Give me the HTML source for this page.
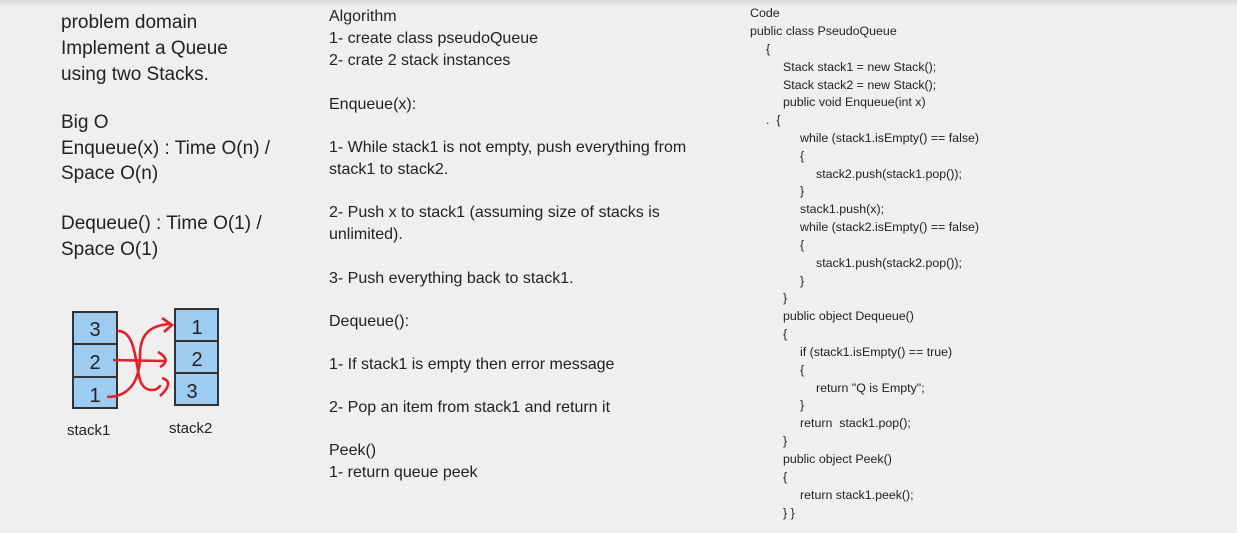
<!DOCTYPE html>
<html><head><style>
body{margin:0;width:1237px;height:533px;background:#efefef;position:relative;overflow:hidden;font-family:"Liberation Sans",sans-serif;color:#222}
.t{position:absolute;white-space:nowrap}
.l{font-size:19px}
.m{font-size:16px}
.c{font-size:12.4px}
.sh{position:absolute;left:0;top:0;width:1237px;height:6px;background:linear-gradient(#d8d8d8,#efefef)}
</style></head><body>
<div class="sh"></div>
<div class="t l" style="left:61px;top:12px">problem domain</div>
<div class="t l" style="left:61px;top:38px">Implement a Queue</div>
<div class="t l" style="left:61px;top:64px">using two Stacks.</div>
<div class="t l" style="left:61px;top:112px">Big O</div>
<div class="t l" style="left:61px;top:138px">Enqueue(x) : Time O(n) /</div>
<div class="t l" style="left:61px;top:163px">Space O(n)</div>
<div class="t l" style="left:61px;top:213px">Dequeue() : Time O(1) /</div>
<div class="t l" style="left:61px;top:239px">Space O(1)</div>

<svg style="position:absolute;left:0;top:0" width="300" height="533">
<g stroke="#333" stroke-width="2" fill="#9ecbf0">
<rect x="73" y="312" width="44" height="96"/>
<rect x="175" y="309" width="43" height="96"/>
</g>
<g stroke="#333" stroke-width="2">
<line x1="74" y1="344" x2="118" y2="344"/><line x1="74" y1="377" x2="117" y2="377"/>
<line x1="175" y1="341" x2="219" y2="341"/><line x1="175" y1="373" x2="218" y2="373"/>
</g>
<g font-family="Liberation Sans" font-size="20" fill="#222" text-anchor="middle">
<text x="95" y="336">3</text><text x="95" y="369">2</text><text x="95" y="402">1</text>
<text x="197" y="334">1</text><text x="197" y="366">2</text><text x="192" y="398">3</text>
</g>
<g stroke="#e2202a" stroke-width="2.6" fill="none">
<path d="M117 331 C135 330,135 360,140 380 C145 395,160 390,160 385"/>
<path d="M113 360 L165 361 M158 352 Q172 360 160 367"/>
<path d="M107 397 C130 397,140 380,140 355 C140 330,155 325,170 324 M162 318 L172 325 L164 332"/>
<path d="M162 378 Q175 382 160 396"/>
</g>
</svg>
<div class="t" style="left:67px;top:422px;font-size:15px">stack1</div>
<div class="t" style="left:169px;top:420px;font-size:15px">stack2</div>

<div class="t m" style="left:329px;top:8px">Algorithm</div>
<div class="t m" style="left:329px;top:30px">1- create class pseudoQueue</div>
<div class="t m" style="left:329px;top:52px">2- crate 2 stack instances</div>
<div class="t m" style="left:329px;top:96px">Enqueue(x):</div>
<div class="t m" style="left:329px;top:139px">1- While stack1 is not empty, push everything from</div>
<div class="t m" style="left:329px;top:161px">stack1 to stack2.</div>
<div class="t m" style="left:329px;top:204px">2- Push x to stack1 (assuming size of stacks is</div>
<div class="t m" style="left:329px;top:226px">unlimited).</div>
<div class="t m" style="left:329px;top:270px">3- Push everything back to stack1.</div>
<div class="t m" style="left:329px;top:313px">Dequeue():</div>
<div class="t m" style="left:329px;top:356px">1- If stack1 is empty then error message</div>
<div class="t m" style="left:329px;top:399px">2- Pop an item from stack1 and return it</div>
<div class="t m" style="left:329px;top:442px">Peek()</div>
<div class="t m" style="left:329px;top:464px">1- return queue peek</div>

<div class="t c" style="left:750px;top:6px">Code</div>
<div class="t c" style="left:750px;top:24px">public class PseudoQueue</div>
<div class="t c" style="left:766px;top:42px">{</div>
<div class="t c" style="left:783px;top:60px">Stack stack1 = new Stack();</div>
<div class="t c" style="left:783px;top:78px">Stack stack2 = new Stack();</div>
<div class="t c" style="left:783px;top:95px">public void Enqueue(int x)</div>
<div class="t c" style="left:766px;top:113px">.&nbsp; {</div>
<div class="t c" style="left:800px;top:131px">while (stack1.isEmpty() == false)</div>
<div class="t c" style="left:800px;top:149px">{</div>
<div class="t c" style="left:816px;top:167px">stack2.push(stack1.pop());</div>
<div class="t c" style="left:800px;top:184px">}</div>
<div class="t c" style="left:800px;top:202px">stack1.push(x);</div>
<div class="t c" style="left:800px;top:220px">while (stack2.isEmpty() == false)</div>
<div class="t c" style="left:800px;top:238px">{</div>
<div class="t c" style="left:816px;top:256px">stack1.push(stack2.pop());</div>
<div class="t c" style="left:800px;top:274px">}</div>
<div class="t c" style="left:783px;top:291px">}</div>
<div class="t c" style="left:783px;top:309px">public object Dequeue()</div>
<div class="t c" style="left:783px;top:327px">{</div>
<div class="t c" style="left:800px;top:345px">if (stack1.isEmpty() == true)</div>
<div class="t c" style="left:800px;top:363px">{</div>
<div class="t c" style="left:816px;top:381px">return "Q is Empty";</div>
<div class="t c" style="left:800px;top:398px">}</div>
<div class="t c" style="left:800px;top:416px">return&nbsp; stack1.pop();</div>
<div class="t c" style="left:783px;top:434px">}</div>
<div class="t c" style="left:783px;top:452px">public object Peek()</div>
<div class="t c" style="left:783px;top:470px">{</div>
<div class="t c" style="left:800px;top:488px">return stack1.peek();</div>
<div class="t c" style="left:783px;top:506px">} }</div>
</body></html>
